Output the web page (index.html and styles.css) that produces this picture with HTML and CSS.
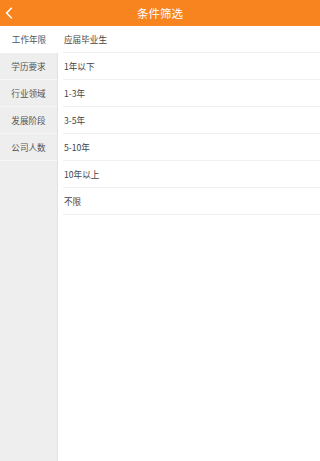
FILE: index.html
```html
<!doctype html>
<html>
<head>
  <meta charset="utf-8">
  <link rel="stylesheet" href="styles.css">
</head>
<body>

  <div class="header">
    <span class="back">
      <svg width="8" height="12" viewBox="0 0 8 12"><path d="M6.8 0.8 L1.6 6 L6.8 11.2" fill="none" stroke="#fff" stroke-width="1.5"/></svg>
    </span>
    <span class="title">条件筛选</span>
  </div>

  <div class="main">
    <div class="menu">
      <div class="menuItem active">工作年限</div>
      <div class="menuItem">学历要求</div>
      <div class="menuItem">行业领域</div>
      <div class="menuItem">发展阶段</div>
      <div class="menuItem">公司人数</div>
    </div>
    <div class="options">
      <div class="option">应届毕业生</div>
      <div class="option">1年以下</div>
      <div class="option">1-3年</div>
      <div class="option">3-5年</div>
      <div class="option">5-10年</div>
      <div class="option">10年以上</div>
      <div class="option">不限</div>
    </div>
  </div>

</body>
</html>
```

FILE: styles.css
```css
body{
  margin: 0;
  font-family: "Noto Sans CJK SC", "Noto Sans", sans-serif;
  background-color: #ffffff;
}
.header{
  height: 26px;
  background-color: #f7841f;
  color: #ffffff;
  display: flex;
  align-items: center;
  justify-content: center;
  position: relative;
}
.title{
  font-size: 11.5px;
}
.back{
  position: absolute;
  left: 5px;
  top: 7px;
  display: flex;
}
.main{
  display: flex;
  height: 435px;
}
.menu{
  width: 57px;
  background-color: #eeeeee;
  border-right: 1px solid #e2e2e2;
}
.menuItem{
  height: 26px;
  line-height: 26px;
  border-bottom: 1px solid #f6f6f6;
  text-align: center;
  font-size: 8.6px;
  color: #555555;
}
.menuItem.active{
  background-color: #ffffff;
  border-bottom-color: #ffffff;
  margin-right: -1px;
}
.options{
  flex: 1;
  padding-left: 5px;
}
.option{
  height: 26px;
  line-height: 26px;
  border-bottom: 1px solid #efefef;
  padding-left: 1px;
  font-size: 8.6px;
  color: #444444;
}
```
